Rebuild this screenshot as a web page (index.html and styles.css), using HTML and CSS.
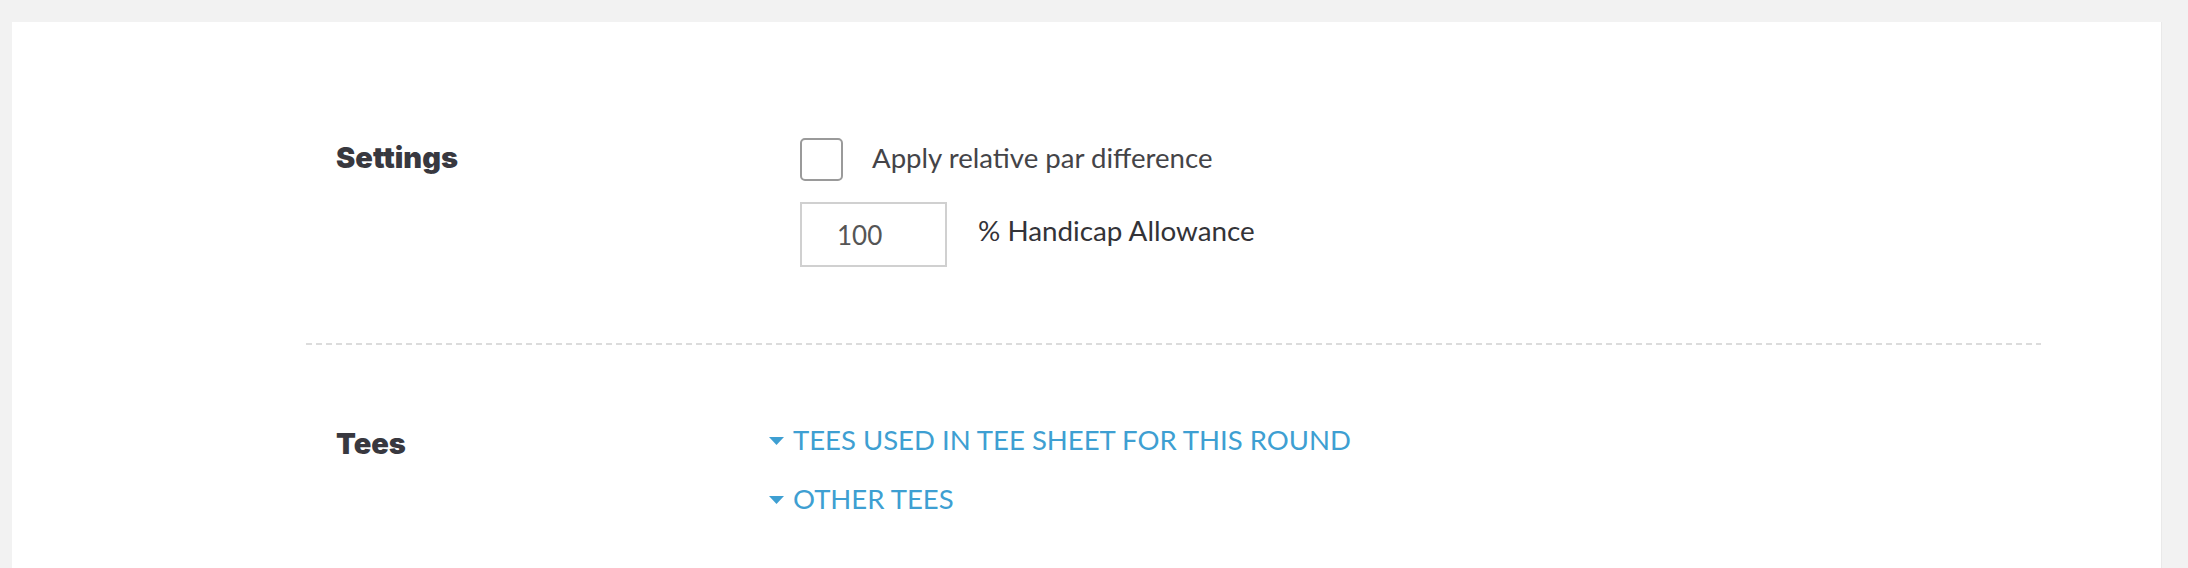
FILE: index.html
```html
<!DOCTYPE html>
<html lang="en">
<head>
<meta charset="utf-8">
<title>Settings</title>
<link rel="stylesheet" href="styles.css">
</head>
<body>
<div class="page">
  <div class="panel">
    <section class="row settings">
      <h2 class="label">Settings</h2>
      <div class="controls">
        <label class="check-row">
          <span class="checkbox"></span>
          <span class="check-text">Apply relative par difference</span>
        </label>
        <div class="input-row">
          <div class="num-input">100</div>
          <span class="input-text">% Handicap Allowance</span>
        </div>
      </div>
    </section>
    <div class="divider"></div>
    <section class="row tees">
      <h2 class="label">Tees</h2>
      <div class="links">
        <a class="toggle"><svg class="caret" viewBox="0 0 15 8" width="15" height="8"><path d="M0 0H15L7.5 8Z"/></svg>TEES USED IN TEE SHEET FOR THIS ROUND</a>
        <a class="toggle"><svg class="caret" viewBox="0 0 15 8" width="15" height="8"><path d="M0 0H15L7.5 8Z"/></svg>OTHER TEES</a>
      </div>
    </section>
  </div>
</div>
</body>
</html>
```
FILE: styles.css
```css
html, body {
  margin: 0;
  padding: 0;
  background: #f2f2f2;
  font-family: "Lato", "Noto Sans", sans-serif;
}

.page {
  padding: 22px 26px 0 12px;
}

.panel {
  background: #ffffff;
  min-height: 546px;
  padding: 116px 120px 0 294px;
  box-sizing: border-box;
  border-right: 1px solid #e9e9e9;
}

.row {
  display: grid;
  grid-template-columns: 464px 1fr;
  padding-left: 30px;
  align-items: start;
}

.label {
  margin: 5px 0 0;
  font-family: "Inter", "Lato", sans-serif;
  font-size: 29px;
  line-height: 1;
  font-weight: 900;
  color: #38383f;
}

.settings {
  padding-bottom: 76px;
}

.controls {
  display: flex;
  flex-direction: column;
}

.check-row {
  display: flex;
  align-items: center;
  gap: 29px;
  height: 43px;
}

.checkbox {
  width: 43px;
  height: 43px;
  box-sizing: border-box;
  border: 2px solid #9a9a9a;
  border-radius: 5px;
  flex: none;
}

.check-text {
  font-size: 27.6px;
  color: #444448;
  position: relative;
  top: -2px;
}

.input-row {
  display: flex;
  align-items: center;
  gap: 31px;
  margin-top: 21px;
}

.num-input {
  width: 147px;
  height: 65px;
  box-sizing: border-box;
  border: 2px solid #d0d0d0;
  padding-left: 35px;
  display: flex;
  align-items: center;
  font-size: 26px;
  color: #555555;
}

.input-text {
  font-size: 27.8px;
  color: #333338;
  position: relative;
  top: -4px;
}

.divider {
  height: 2px;
  background: repeating-linear-gradient(to right, #dcdcdc 0 6px, transparent 6px 10px);
}

.tees {
  padding-top: 79px;
}

.links {
  display: flex;
  flex-direction: column;
  gap: 28px;
  margin-left: -31px;
}

.toggle {
  font-size: 27.5px;
  color: #3e9fd2;
  text-decoration: none;
  line-height: 31px;
  cursor: pointer;
}

.caret {
  fill: #3e9fd2;
  vertical-align: 5px;
  margin-right: 9px;
}
```
